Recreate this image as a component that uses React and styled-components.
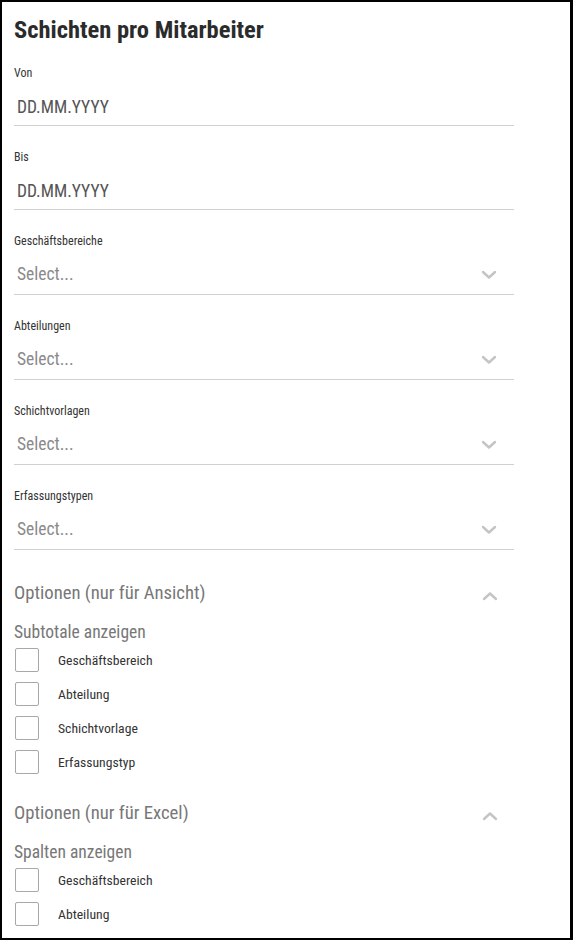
import React from 'react';
import styled, {createGlobalStyle} from 'styled-components';

const GlobalStyle = createGlobalStyle`
    html, body {
        margin: 0;
        padding: 0;
        background: #fff;
    }
    body {
        font-family: "Roboto Condensed", "Liberation Sans Narrow", "Arial Narrow", Roboto, sans-serif;
    }
`;

const Frame = styled.div`
    width: 573px;
    height: 940px;
    box-sizing: border-box;
    border: 2px solid #000;
    border-right-width: 3px;
    overflow: hidden;
    padding: 0 0 0 12px;
`;

const Title = styled.h1`
    margin: 14px 0 0 0;
    font-size: 24.5px;
    line-height: 28px;
    font-weight: 700;
    color: #2b2b2b;
`;

const Field = styled.div`
    width: 500px;
    margin-top: ${p => p.$first ? '21px' : '23px'};
`;

const Label = styled.div`
    font-size: 12px;
    line-height: 16px;
    color: #333;
`;

const Input = styled.div`
    box-sizing: border-box;
    height: ${p => p.$select ? '46px' : '45px'};
    padding: ${p => p.$select ? '15px' : '16px'} 17px 0 3px;
    border-bottom: 1px solid #d0d0d0;
    display: flex;
    align-items: flex-start;
    justify-content: space-between;
    font-size: 17.5px;
    line-height: 20px;
    color: ${p => p.$select ? '#8a8a8a' : '#555'};
`;

const Chevron = ({up}) => (
    <svg width="16" height="10" viewBox="0 0 16 10" style={{marginTop: 6}}>
        <path d={up ? 'M2 8 L8 2.5 L14 8' : 'M2 2 L8 7.5 L14 2'} fill="none" stroke="#c4c4c4" strokeWidth="2.4" strokeLinecap="round" strokeLinejoin="round"/>
    </svg>
);

const Section = styled.div`
    width: 500px;
    margin-top: ${p => p.$first ? '30.5px' : '27px'};
`;

const SectionHead = styled.div`
    display: flex;
    align-items: center;
    justify-content: space-between;
    padding-right: 16px;
    font-size: 18.7px;
    line-height: 24px;
    color: #777;
`;

const SubTitle = styled.div`
    margin-top: 16px;
    font-size: 17.5px;
    line-height: 22px;
    color: #777;
`;

const Checks = styled.div`
    margin-top: 5px;
    display: flex;
    flex-direction: column;
    gap: 10px;
`;

const CheckRow = styled.label`
    display: flex;
    align-items: center;
    height: 24px;
    font-size: 13.7px;
    color: #333;
`;

const Box = styled.span`
    box-sizing: border-box;
    width: 24px;
    height: 24px;
    margin: 0 19px 0 1px;
    border: 1px solid #a8a8a8;
    border-radius: 2px;
    background: #fff;
`;

const dateFields = ['Von', 'Bis'];
const selectFields = ['Geschäftsbereiche', 'Abteilungen', 'Schichtvorlagen', 'Erfassungstypen'];

const options = [
    {head: 'Optionen (nur für Ansicht)', sub: 'Subtotale anzeigen', items: ['Geschäftsbereich', 'Abteilung', 'Schichtvorlage', 'Erfassungstyp']},
    {head: 'Optionen (nur für Excel)', sub: 'Spalten anzeigen', items: ['Geschäftsbereich', 'Abteilung']},
];

export default function App() {
    return (
        <Frame>
            <GlobalStyle/>
            <Title>Schichten pro Mitarbeiter</Title>
            {dateFields.map((name, i) => (
                <Field key={name} $first={i === 0}>
                    <Label>{name}</Label>
                    <Input>DD.MM.YYYY</Input>
                </Field>
            ))}
            {selectFields.map(name => (
                <Field key={name}>
                    <Label>{name}</Label>
                    <Input $select>
                        <span>Select...</span>
                        <Chevron/>
                    </Input>
                </Field>
            ))}
            {options.map((o, i) => (
                <Section key={o.head} $first={i === 0}>
                    <SectionHead>
                        <span>{o.head}</span>
                        <Chevron up/>
                    </SectionHead>
                    <SubTitle>{o.sub}</SubTitle>
                    <Checks>
                        {o.items.map(item => (
                            <CheckRow key={item}>
                                <Box/>
                                {item}
                            </CheckRow>
                        ))}
                    </Checks>
                </Section>
            ))}
        </Frame>
    );
}
